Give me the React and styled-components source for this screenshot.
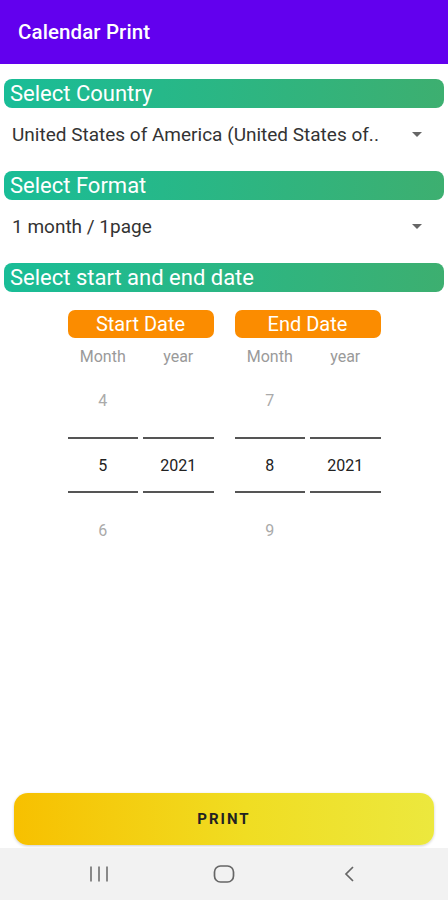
import React from "react";
import styled, { createGlobalStyle } from "styled-components";

const Global = createGlobalStyle`
  html, body { margin: 0; padding: 0; background: #ffffff; }
  body { font-family: Roboto, "Noto Sans", "Liberation Sans", sans-serif; }
  #root { height: 900px; }
`;

const Screen = styled.div`
  width: 448px;
  height: 900px;
  display: flex;
  flex-direction: column;
  background: #fff;
  overflow: hidden;
`;

const AppBar = styled.header`
  height: 64px;
  flex: none;
  background: #6200ee;
  display: flex;
  align-items: center;
  padding: 0 18px;
  box-sizing: border-box;
`;

const Title = styled.h1`
  margin: 0;
  color: #fff;
  font-size: 20.5px;
  font-weight: 500;
  letter-spacing: 0.1px;
`;

const Body = styled.main`
  flex: 1;
  display: flex;
  flex-direction: column;
  padding: 15px 4px 0;
`;

const SectionHeader = styled.div`
  height: 29px;
  border-radius: 8px;
  background: linear-gradient(to right, #19bd97, #3daf70);
  color: #fff;
  font-size: 22px;
  line-height: 29px;
  padding: 0 6px;
  white-space: nowrap;
`;

const Dropdown = styled.div`
  height: 63px;
  box-sizing: border-box;
  display: flex;
  align-items: center;
  justify-content: space-between;
  padding: 0 22px 10px 8px;
  font-size: 19px;
  color: #333;
`;

const DropText = styled.span`
  white-space: nowrap;
`;

const Arrow = styled.span`
  width: 0;
  height: 0;
  border-left: 5px solid transparent;
  border-right: 5px solid transparent;
  border-top: 5px solid #666;
`;

const DateArea = styled.div`
  display: flex;
  justify-content: center;
  gap: 21px;
  padding-top: 18px;
`;

const DateGroup = styled.div`
  width: 146px;
  display: flex;
  flex-direction: column;
`;

const OrangeTag = styled.div`
  height: 28px;
  border-radius: 7px;
  background: #fb8c00;
  color: #fff;
  font-size: 20px;
  line-height: 28px;
  text-align: center;
`;

const Columns = styled.div`
  display: flex;
  gap: 5px;
`;

const Column = styled.div`
  flex: 1;
  display: flex;
  flex-direction: column;
  align-items: stretch;
`;

const ColLabel = styled.div`
  padding-top: 8px;
  height: 22px;
  line-height: 22px;
  text-align: center;
  font-size: 16px;
  color: #9a9a9a;
`;

const Item = styled.div`
  position: relative;
  height: 65px;
  display: flex;
  align-items: center;
  justify-content: center;
  font-size: 16px;
  color: ${(p) => (p.$selected ? "#222" : "#aaa")};
  ${(p) =>
    p.$selected &&
    `
    &::before, &::after {
      content: "";
      position: absolute;
      left: 0;
      right: 0;
      height: 2px;
      background: #555;
    }
    &::before { top: 4px; }
    &::after { bottom: 5px; }
  `}
`;

const Spacer = styled.div`
  flex: 1;
`;

const PrintButton = styled.button`
  margin: 0 10px 3px;
  height: 52px;
  border: none;
  border-radius: 14px;
  background: linear-gradient(to right, #f7c000, #f0dd22 55%, #ece83e);
  box-shadow: 0 1px 3px rgba(0, 0, 0, 0.2);
  font-family: Roboto, "Noto Sans", sans-serif;
  font-size: 15px;
  font-weight: 700;
  letter-spacing: 2px;
  color: #222;
`;

const NavBar = styled.nav`
  height: 52px;
  flex: none;
  background: #f2f2f2;
  display: flex;
  align-items: center;
  justify-content: center;
  gap: 101px;
`;

const NavIcon = styled.svg`
  width: 24px;
  height: 24px;
`;

function Picker({ label, values }) {
  return (
    <Column>
      <ColLabel>{label}</ColLabel>
      {values.map((v, i) => (
        <Item key={i} $selected={i === 1}>
          {v}
        </Item>
      ))}
    </Column>
  );
}

function DateSelector({ title, month }) {
  return (
    <DateGroup>
      <OrangeTag>{title}</OrangeTag>
      <Columns>
        <Picker label="Month" values={[month - 1, month, month + 1]} />
        <Picker label="year" values={["", "2021", ""]} />
      </Columns>
    </DateGroup>
  );
}

export default function App() {
  return (
    <Screen>
      <Global />
      <AppBar>
        <Title>Calendar Print</Title>
      </AppBar>
      <Body>
        <SectionHeader>Select Country</SectionHeader>
        <Dropdown>
          <DropText>United States of America (United States of..</DropText>
          <Arrow />
        </Dropdown>
        <SectionHeader>Select Format</SectionHeader>
        <Dropdown>
          <DropText>1 month / 1page</DropText>
          <Arrow />
        </Dropdown>
        <SectionHeader>Select start and end date</SectionHeader>
        <DateArea>
          <DateSelector title="Start Date" month={5} />
          <DateSelector title="End Date" month={8} />
        </DateArea>
        <Spacer />
        <PrintButton>PRINT</PrintButton>
      </Body>
      <NavBar>
        <NavIcon viewBox="0 0 24 24" fill="none" stroke="#666" strokeWidth="1.5">
          <line x1="4" y1="4.5" x2="4" y2="19.5" />
          <line x1="12" y1="4.5" x2="12" y2="19.5" />
          <line x1="20" y1="4.5" x2="20" y2="19.5" />
        </NavIcon>
        <NavIcon viewBox="0 0 24 24" fill="none" stroke="#666" strokeWidth="1.7">
          <rect x="2.5" y="4" width="19" height="16" rx="6" />
        </NavIcon>
        <NavIcon viewBox="0 0 24 24" fill="none" stroke="#666" strokeWidth="1.7">
          <polyline points="16,5 9,12 16,19" />
        </NavIcon>
      </NavBar>
    </Screen>
  );
}
